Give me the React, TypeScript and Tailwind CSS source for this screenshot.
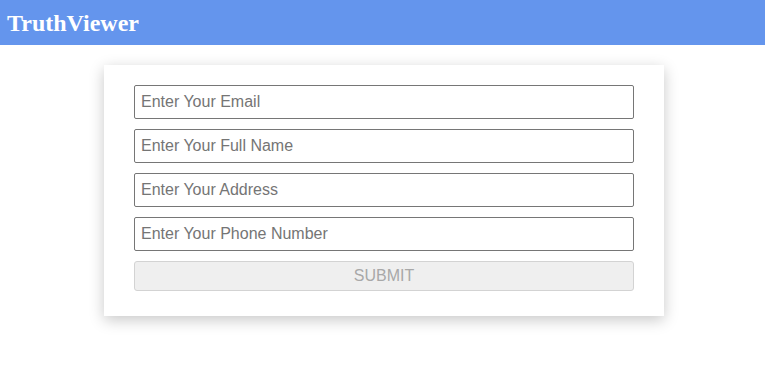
import { useState } from "react";

const fields = [
  { name: "email", placeholder: "Enter Your Email" },
  { name: "fullName", placeholder: "Enter Your Full Name" },
  { name: "address", placeholder: "Enter Your Address" },
  { name: "phone", placeholder: "Enter Your Phone Number" },
];

export default function App() {
  const [values, setValues] = useState<Record<string, string>>({});
  const ready = fields.every((f) => (values[f.name] || "").trim() !== "");

  return (
    <div className="min-h-screen bg-white font-['Liberation_Sans',Arial,sans-serif]">
      <header className="flex h-[45px] items-center bg-[#6495ed] px-[7px]">
        <h1 className="font-['Liberation_Serif','Times_New_Roman',serif] text-[24px] font-bold text-white">
          TruthViewer
        </h1>
      </header>

      <div className="flex justify-center pl-[3px] pt-5">
        <form
          className="flex w-[560px] flex-col gap-[10px] bg-white px-[30px] pb-[25px] pt-5 shadow-[0_4px_14px_rgba(0,0,0,0.22)]"
          onSubmit={(e) => e.preventDefault()}
        >
          {fields.map((f) => (
            <input
              key={f.name}
              name={f.name}
              placeholder={f.placeholder}
              value={values[f.name] || ""}
              onChange={(e) => setValues({ ...values, [f.name]: e.target.value })}
              className="h-[34px] w-full rounded-[2px] border border-[#767676] px-[6px] text-base text-[#222] outline-none placeholder:text-[#757575]"
            />
          ))}
          <button
            type="submit"
            disabled={!ready}
            className="h-[30px] w-full rounded-[3px] border border-[#d3d3d3] bg-[#efefef] text-base text-[#a8a8a8]"
          >
            SUBMIT
          </button>
        </form>
      </div>
    </div>
  );
}
